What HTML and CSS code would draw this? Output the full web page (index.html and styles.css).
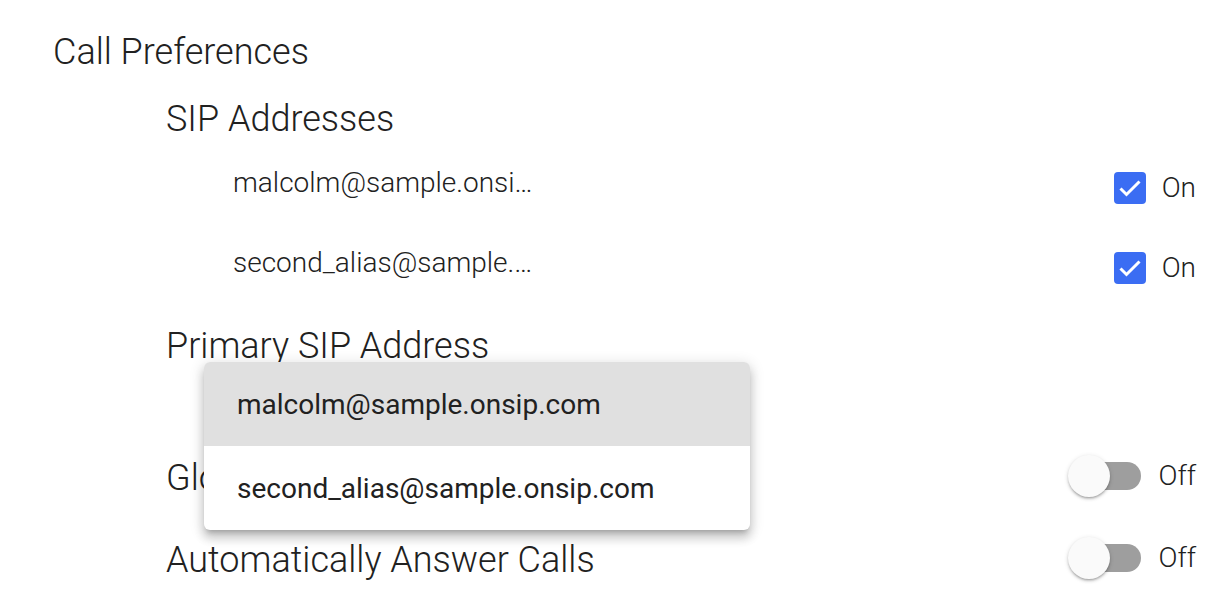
FILE: index.html
```html
<!DOCTYPE html>
<html>
<head>
<meta charset="utf-8">
<link rel="stylesheet" href="styles.css">
</head>
<body>
<div class="page">
  <h1 class="title">Call Preferences</h1>
  <section class="group">
    <h2 class="group-title first">SIP Addresses</h2>
    <div class="addr-row">
      <span class="addr">malcolm@sample.onsi…</span>
      <label class="control">
        <span class="checkbox"><svg viewBox="0 0 32 32" width="32" height="32"><path d="M6.5 16.5l6 6L25.5 9.5" fill="none" stroke="#fff" stroke-width="3"/></svg></span>
        <span class="ctl-label">On</span>
      </label>
    </div>
    <div class="addr-row">
      <span class="addr">second_alias@sample.…</span>
      <label class="control">
        <span class="checkbox"><svg viewBox="0 0 32 32" width="32" height="32"><path d="M6.5 16.5l6 6L25.5 9.5" fill="none" stroke="#fff" stroke-width="3"/></svg></span>
        <span class="ctl-label">On</span>
      </label>
    </div>
    <h2 class="group-title second">Primary SIP Address</h2>
    <div class="select-wrap">
      <div class="select-field"></div>
      <ul class="menu">
        <li class="menu-item active">malcolm@sample.onsip.com</li>
        <li class="menu-item">second_alias@sample.onsip.com</li>
      </ul>
    </div>
    <div class="toggle-row">
      <span class="toggle-title">Global Do Not Disturb</span>
      <label class="control">
        <span class="switch"><span class="track"></span><span class="thumb"></span></span>
        <span class="ctl-label off">Off</span>
      </label>
    </div>
    <div class="toggle-row">
      <span class="toggle-title">Automatically Answer Calls</span>
      <label class="control">
        <span class="switch"><span class="track"></span><span class="thumb"></span></span>
        <span class="ctl-label off">Off</span>
      </label>
    </div>
  </section>
</div>
</body>
</html>
```
FILE: styles.css
```css
html, body {
  margin: 0;
  padding: 0;
  background: #fff;
}
body {
  font-family: Roboto, "Liberation Sans", sans-serif;
  color: #212121;
  overflow: hidden;
}
.page {
  padding: 30px 36px 0 53px;
}
.title {
  margin: 0;
  font-size: 36px;
  font-weight: 300;
  line-height: 44px;
  height: 44px;
}
.group {
  padding-left: 113px;
}
.group-title {
  margin: 0;
  font-size: 36px;
  font-weight: 300;
  line-height: 44px;
  height: 44px;
}
.group-title.first {
  margin-top: 23px;
  margin-bottom: 7px;
}
.group-title.second {
  margin-top: 16px;
}
.addr-row {
  display: flex;
  align-items: center;
  justify-content: space-between;
  height: 80px;
  padding-left: 67px;
}
.addr {
  font-size: 28px;
  font-weight: 300;
  line-height: 34px;
  padding-bottom: 11px;
}
.control {
  display: flex;
  align-items: center;
}
.checkbox {
  width: 32px;
  height: 32px;
  border-radius: 4px;
  background: #3b6df3;
  display: flex;
  align-items: center;
  justify-content: center;
}
.ctl-label {
  font-size: 28px;
  font-weight: 300;
  margin-left: 16px;
  line-height: 34px;
}
.ctl-label.off {
  margin-left: 17px;
}
.select-wrap {
  position: relative;
  height: 67px;
}
.select-field {
  height: 67px;
}
.menu {
  position: absolute;
  top: -6px;
  left: 38px;
  width: 546px;
  margin: 0;
  padding: 0;
  list-style: none;
  background: #fff;
  border-radius: 6px;
  overflow: hidden;
  z-index: 2;
  box-shadow: 0 5px 5px -3px rgba(0,0,0,.2), 0 8px 10px 1px rgba(0,0,0,.14), 0 3px 14px 2px rgba(0,0,0,.12);
}
.menu-item {
  height: 84px;
  display: flex;
  align-items: center;
  padding-left: 33px;
  font-size: 28px;
  font-weight: 400;
  color: #212121;
}
.menu-item.active {
  background: #e0e0e0;
}
.toggle-row {
  display: flex;
  align-items: center;
  justify-content: space-between;
  height: 82px;
}
.toggle-title {
  font-size: 36px;
  font-weight: 300;
  line-height: 44px;
  padding-top: 3px;
}
.switch {
  position: relative;
  width: 72px;
  height: 42px;
  display: block;
}
.track {
  position: absolute;
  left: 0;
  top: 7px;
  width: 72px;
  height: 28px;
  border-radius: 14px;
  background: #9e9e9e;
}
.thumb {
  position: absolute;
  left: -1px;
  top: 0;
  width: 42px;
  height: 42px;
  border-radius: 50%;
  background: #fafafa;
  box-shadow: 0 2px 2px -1px rgba(0,0,0,.2), 0 2px 3px 0 rgba(0,0,0,.14), 0 1px 5px 0 rgba(0,0,0,.12);
}
```
